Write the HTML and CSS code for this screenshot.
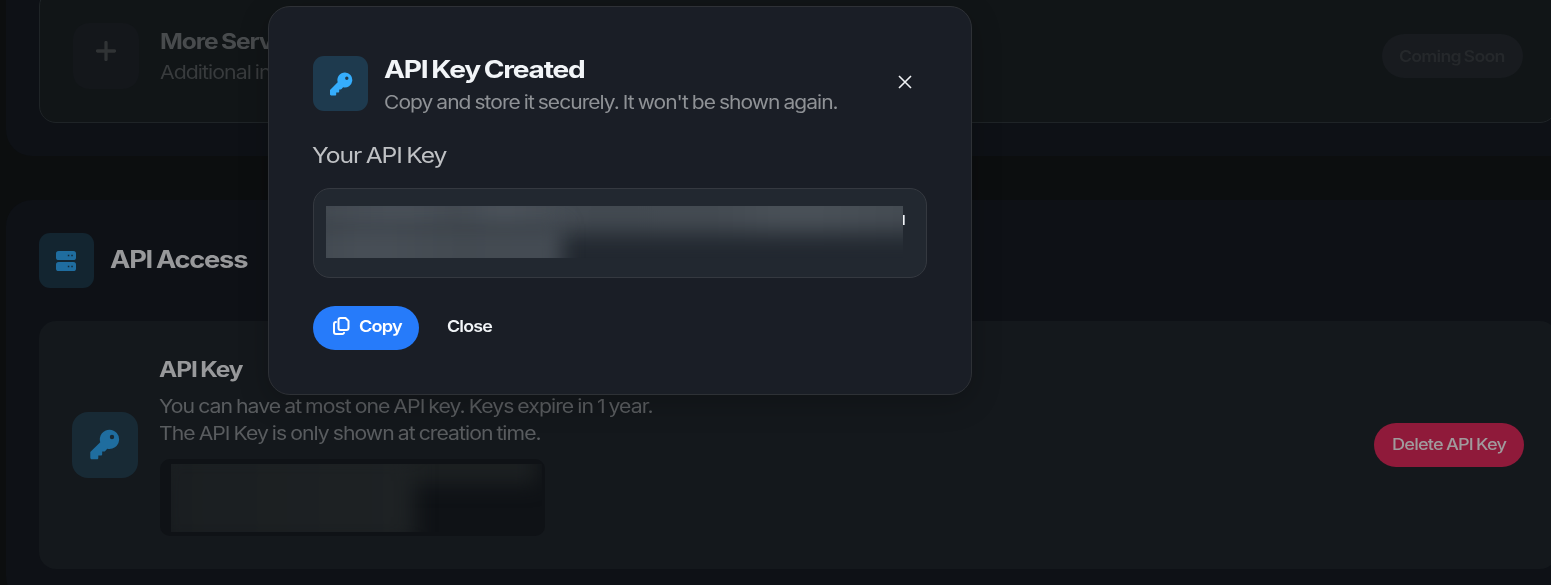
FILE: index.html
```html
<!DOCTYPE html>
<html lang="en">
<head>
<meta charset="utf-8">
<title>API Access</title>
<link rel="stylesheet" href="styles.css">
</head>
<body>
<svg class="defs" width="0" height="0" aria-hidden="true">
  <symbol id="key" viewBox="0 0 24 24"><path fill="currentColor" fill-rule="evenodd" d="M16 0.500a7.500 7.500 0 0 0-7.300 9.700L1 17.900V22.300C1 23 1.500 23.500 2.200 23.500H6.200C6.800 23.500 7.200 23.100 7.200 22.500V20.500H9.200C9.800 20.500 10.200 20.100 10.200 19.500V17.500H11.500C12 17.500 12.300 17.300 12.600 17L14.100 15.300A7.500 7.500 0 1 0 16 .500ZM17.800 4.500a1.700 1.700 0 1 1 0 3.400a1.700 1.700 0 0 1 0-3.400Z"/></symbol>
</svg>
<main class="page">
  <section class="section section-services">
    <article class="card card-soon">
      <div class="tile tile-muted">
        <svg width="20" height="20" viewBox="0 0 20 20"><path d="M10 1.500v17M1.500 10h17" stroke="currentColor" stroke-width="3.300" stroke-linecap="round"/></svg>
      </div>
      <div class="info">
        <h3 class="card-title"><span class="t t-more">More Services</span></h3>
        <p class="card-text"><span class="t t-add">Additional integrations</span></p>
      </div>
      <button class="pill pill-soon"><span class="t t-soon">Coming Soon</span></button>
    </article>
  </section>
  <section class="section section-api">
    <header class="section-head">
      <div class="badge badge-dim">
        <svg width="20" height="20" viewBox="0 0 20 20"><rect width="20" height="9" rx="2.600" fill="#1f6d9f"/><rect y="11" width="20" height="9" rx="2.600" fill="#1f6d9f"/><path d="M11.800 4.500h1.500M15.300 4.500h1.500M11.800 15.500h1.500M15.300 15.500h1.500" stroke="#132937" stroke-width="1.500"/></svg>
      </div>
      <h2 class="section-title"><span class="t t-access">API Access</span></h2>
    </header>
    <article class="card card-api">
      <div class="tile tile-key"><svg width="31" height="31"><use href="#key"/></svg></div>
      <div class="info">
        <h3 class="card-title"><span class="t t-key">API Key</span></h3>
        <p class="card-text"><span class="t t-desc1">You can have at most one API key. Keys expire in 1 year.</span><br><span class="t t-desc2">The API Key is only shown at creation time.</span></p>
        <div class="stored-key"><div class="stored-mask"><i></i><i></i></div></div>
      </div>
      <button class="pill pill-delete"><span class="t t-delete">Delete API Key</span></button>
    </article>
  </section>
</main>
<div class="modal" role="dialog">
  <header class="modal-head">
    <div class="badge"><svg width="24" height="24"><use href="#key"/></svg></div>
    <div class="modal-heading">
      <h2 class="modal-title"><span class="t t-created">API Key Created</span></h2>
      <p class="modal-sub"><span class="t t-sub">Copy and store it securely. It won't be shown again.</span></p>
    </div>
    <button class="dismiss" aria-label="Close"><svg width="14" height="14" viewBox="0 0 14 14"><path d="M1 1l12 12M13 1L1 13" stroke="currentColor" stroke-width="1.600"/></svg></button>
  </header>
  <div class="label"><span class="t t-label">Your API Key</span></div>
  <div class="key-box"><div class="key-mask"><i></i><i></i></div><span class="key-tail"></span></div>
  <div class="actions">
    <button class="pill pill-copy">
      <svg width="17" height="18" viewBox="0 0 17 18" fill="none" stroke="currentColor" stroke-width="2" stroke-linejoin="round" stroke-linecap="round"><path d="M7.500 1h5l3 3v7a2 2 0 0 1-2 2h-6a2 2 0 0 1-2-2V3a2 2 0 0 1 2-2Z"/><path d="M3 5a2 2 0 0 0-2 2v8a2 2 0 0 0 2 2h6a2 2 0 0 0 2-1.200"/></svg>
      <span class="t t-copy">Copy</span>
    </button>
    <button class="link-close"><span class="t t-close">Close</span></button>
  </div>
</div>
</body>
</html>
```
FILE: styles.css
```css
* { box-sizing: border-box; margin: 0; padding: 0; }
body { width: 1551px; height: 585px; overflow: hidden; background: #0c0e0f; font-family: Inter, "Liberation Sans", sans-serif; }
button { border: 0; background: none; font: inherit; color: inherit; }
svg { display: block; flex: none; }
.defs { position: absolute; }

/* Extended-width lettering */
.t { display: inline-block; white-space: nowrap; letter-spacing: -0.045em; word-spacing: -0.05em; transform-origin: 0 50%; transform: scaleX(var(--w, 1.1)); }
.t-more { --w: 1.169; }
.t-add { --w: 1.15; }
.t-soon { --w: 1.112; }
.t-access { --w: 1.137; }
.t-key { --w: 1.165; }
.t-desc1 { --w: 1.147; }
.t-desc2 { --w: 1.145; }
.t-delete { --w: 1.135; }
.t-created { --w: 1.172; }
.t-sub { --w: 1.135; }
.t-label { --w: 1.174; }
.t-copy { --w: 1.135; }
.t-close { --w: 1.115; }

.page { width: 1590px; height: 585px; overflow: hidden; padding-left: 6px; display: flex; flex-direction: column; gap: 44px; }
.section { flex: none; display: flex; flex-direction: column; width: 1584px; padding: 33px; background: #0e1116; border-radius: 26px; }
.section-services { height: 156px; padding-top: 0; border-radius: 0 0 26px 26px; }
.card { display: flex; width: 1518px; border-radius: 17px; }
.card-soon { flex: none; height: 134px; margin-top: -11px; padding: 33px; border: 1px solid #1f2427; background: #111517; }
.tile { flex: none; width: 66px; height: 66px; border-radius: 16px; display: flex; align-items: center; justify-content: center; }
.tile-muted { background: #14171b; color: #303335; padding-bottom: 10px; }
.tile-key { align-self: center; background: #182a35; color: #1f6d9f; }
.tile-key svg { margin: -2px 0 0 -1px; }
.info { flex: 1; margin-left: 21px; }
.card-title { font-size: 21px; line-height: 32px; font-weight: 700; }
.card-text { font-size: 18.500px; line-height: 27px; }
.card-soon .card-title { margin-top: 3px; color: #484b4d; }
.card-soon .card-text { margin-top: 1px; color: #383b3d; }
.pill { flex: none; height: 44px; border-radius: 22px; font-size: 16px; font-weight: 600; text-align: left; }
.pill-soon { width: 141px; margin-top: 11px; padding: 0 17px 1px; background: #181b1f; color: #25282b; }

.section-api { height: 402px; }
.section-head { display: flex; align-items: center; gap: 16px; height: 55px; margin-bottom: 33px; }
.badge { flex: none; width: 55px; height: 55px; border-radius: 11px; display: flex; align-items: center; justify-content: center; background: #1e3a4e; color: #35adfc; }
.badge-dim { background: #132530; }
.badge-dim svg { margin-left: -1px; }
.section-title { font-size: 24px; line-height: 32px; margin-top: -1px; color: #98999b; }
.card-api { height: 248px; padding: 33px; background: #14181c; }
.card-api .info { margin-left: 21px; }
.card-api .card-title { color: #98999b; }
.card-api .card-text { margin-top: 7px; color: #595c5f; }
.stored-key { width: 385px; height: 77px; margin: 12px 0 0 1px; padding: 5px 0 0 11px; border-radius: 10px; background: #0f1216; }
.stored-mask { position: relative; width: 371px; height: 68px; overflow: hidden; }
.stored-mask i, .key-mask i { position: absolute; display: block; }
.stored-mask i:first-child { left: -10px; top: -14px; width: 376px; height: 34px; background: #1c2022; filter: blur(10px); }
.stored-mask i:last-child { left: -10px; top: -10px; width: 254px; height: 90px; background: linear-gradient(90deg, #1a1e21, #1e2224); filter: blur(10px); }
.pill-delete { width: 150px; align-self: center; padding: 0 18px 2px; background: #8f1a3a; color: #a09a9c; font-weight: 500; }

.modal { position: fixed; left: 268px; top: 6px; width: 704px; height: 389px; padding: 49px 44px 0; border: 1px solid #2e3136; border-radius: 22px; background: #1a1e26; box-shadow: 0 8px 30px rgba(0,0,0,.22); }
.modal-head { display: flex; height: 55px; }
.modal-heading { flex: 1; margin-left: 16px; }
.modal-title { font-size: 24px; line-height: 30px; color: #f2f5f8; margin-top: -1px; }
.modal-sub { font-size: 18.500px; line-height: 27px; margin-top: 4px; color: #8f9296; }
.dismiss { width: 14px; height: 14px; margin: 19px 15px 0 0; color: #f0f2f4; }
.label { height: 32px; margin: 29px 0 0 -1px; font-size: 21px; line-height: 32px; color: #bfc1c4; }
.key-box { display: flex; height: 90px; margin-top: 16px; padding: 17px 12px; border: 1px solid #353940; border-radius: 17px; background: #222830; }
.key-mask { position: relative; width: 577px; height: 52px; overflow: hidden; }
.key-mask i:first-child { left: -20px; top: -24px; width: 630px; height: 51px; background: linear-gradient(90deg, #424950, #4a5159 15%, #444b52 24%, #4c535b 31%, #434a51 45%, #444b52 65%, #4b5259 78%, #434a51); filter: blur(11px); }
.key-mask i:last-child { left: -20px; top: 18px; width: 256px; height: 58px; background: linear-gradient(90deg, #424950, #484f57 25%, #434a51 60%, #454c54); filter: blur(10px); }
.key-tail { width: 2px; height: 10px; margin-top: 9px; background: linear-gradient(90deg, #f4f6f8 50%, #a5abb3 50%); }
.actions { display: flex; align-items: center; margin-top: 28px; color: #f2f5f8; }
.pill-copy { display: flex; align-items: center; gap: 9px; width: 106px; padding: 0 0 4px 20px; background: #267bfa; color: #fff; }
.link-close { margin-left: 28px; padding-bottom: 4px; font-size: 16px; font-weight: 600; }
```
